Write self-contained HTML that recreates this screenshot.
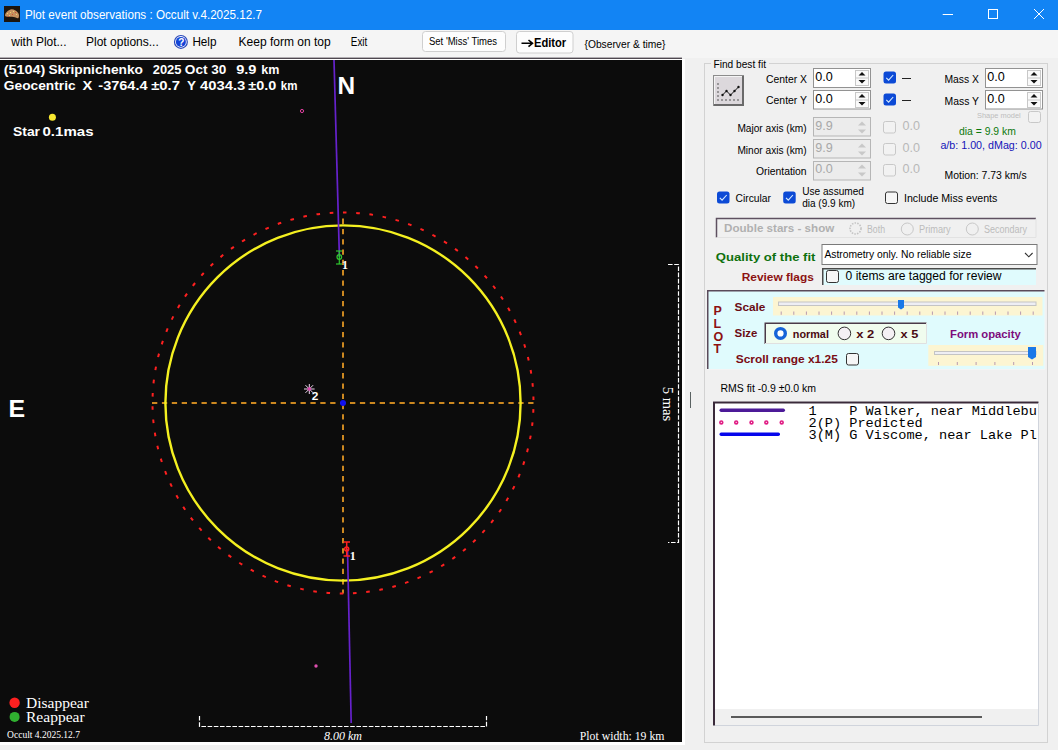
<!DOCTYPE html>
<html><head><meta charset="utf-8">
<style>
*{margin:0;padding:0;box-sizing:border-box}
html,body{width:1058px;height:750px;overflow:hidden;background:#f0f0f0;font-family:"Liberation Sans",sans-serif;font-size:12px;color:#000}
.a{position:absolute}
svg{position:absolute;left:0;top:0}
</style></head><body>
<svg width="1058" height="750" viewBox="0 0 1058 750">
<!-- ===== title bar ===== -->
<rect x="0" y="0" width="1058" height="30" fill="#1284f4"/>
<rect x="4" y="6" width="16" height="16" fill="#1c140e"/>
<path d="M5 15C5.5 12.5 7.5 11 9.5 10C11 9 13 9.2 15.5 10.5C17.5 11.5 19 13.5 19 15.5C19 17.5 18.5 18.5 17.5 18.3C16 17.8 14 16.8 12 16.8C10 16.8 7.5 17 6 16.5C5.2 16.2 4.9 15.6 5 15Z" fill="#c49060"/>
<g fill="#f0d070"><rect x="7" y="13" width="1" height="1"/><rect x="10" y="12" width="1" height="1"/><rect x="13" y="11" width="1" height="1"/><rect x="16" y="14" width="1" height="1"/><rect x="9" y="15" width="1" height="1"/></g>
<g fill="#d05030"><rect x="12" y="14" width="1" height="1"/><rect x="15" y="12" width="1" height="1"/><rect x="8" y="16" width="1" height="1"/></g>
<rect x="942.7" y="14" width="10.3" height="1" fill="#fff"/>
<rect x="988.5" y="9.5" width="9" height="9" fill="none" stroke="#fff" stroke-width="1"/>
<path d="M1034 9L1044 19M1044 9L1034 19" stroke="#fff" stroke-width="1"/>
<!-- ===== menu bar ===== -->
<rect x="0" y="30" width="1058" height="28" fill="#f5f5f5"/>

<circle cx="180.9" cy="41.9" r="6.4" fill="#fff" stroke="#2a48b8" stroke-width="1.2"/>
<circle cx="180.9" cy="41.9" r="5" fill="#1244d8"/>
<text x="181.2" y="45.6" font-family="Liberation Sans" font-weight="bold" font-size="10" fill="#fff" text-anchor="middle">?</text>
<rect x="422.5" y="31.5" width="83" height="20" rx="3" fill="#fdfdfd" stroke="#cfcfcf"/>
<rect x="516.5" y="31.5" width="56.5" height="21.5" rx="3" fill="#fdfdfd" stroke="#cfcfcf"/>
<!-- ===== plot ===== -->
<rect x="0" y="59" width="685" height="686" fill="#ffffff"/>
<rect x="0" y="57.6" width="682" height="1.4" fill="#4e4850"/>
<rect x="0" y="60" width="682" height="682" fill="#0c0c0c"/>
<circle cx="52.4" cy="117.2" r="3.5" fill="#f8e830"/>
<circle cx="302" cy="111" r="1.6" fill="none" stroke="#e040a0" stroke-width="1"/>
<circle cx="316" cy="666" r="1.7" fill="#e050b0"/>
<line x1="152" y1="403" x2="534" y2="403" stroke="#cc8820" stroke-width="2" stroke-dasharray="5.3 4.6"/>
<line x1="343" y1="218.6" x2="343" y2="593.5" stroke="#cc8820" stroke-width="2" stroke-dasharray="5.3 5"/>
<circle cx="343" cy="403" r="190.5" fill="none" stroke="#ff2020" stroke-width="2" stroke-dasharray="3.6 9.7" stroke-dashoffset="-6.2"/>
<circle cx="343" cy="403" r="177.6" fill="none" stroke="#f4f020" stroke-width="2.4"/>
<line x1="334" y1="60" x2="339.4" y2="257" stroke="#6622cc" stroke-width="1.7"/>
<line x1="347.5" y1="549" x2="351.2" y2="723" stroke="#6622cc" stroke-width="1.7"/>
<circle cx="343" cy="403" r="3" fill="#1010f0"/>
<g stroke="#30c830" stroke-width="1.2" fill="none">
<line x1="336" y1="251" x2="342" y2="251"/><line x1="336" y1="264" x2="342" y2="264"/>
<line x1="339.3" y1="251" x2="339.3" y2="264"/><circle cx="339.3" cy="257" r="2.3"/>
</g>
<g stroke="#ff2020" stroke-width="1.5" fill="none">
<line x1="343.5" y1="542" x2="350" y2="542"/><line x1="343.5" y1="556" x2="350" y2="556"/>
<line x1="346.7" y1="542" x2="346.7" y2="556"/><circle cx="346.7" cy="549" r="2"/>
</g>
<g stroke="#f0d8f0" stroke-width="1">
<line x1="309.3" y1="384" x2="309.3" y2="394"/><line x1="304" y1="389" x2="314.6" y2="389"/>
<line x1="305.5" y1="385.2" x2="313.1" y2="392.8"/><line x1="313.1" y1="385.2" x2="305.5" y2="392.8"/>
</g>
<circle cx="309.3" cy="389" r="1.8" fill="#e040b0"/>
<path d="M668 264.5H678.5V542.5H668" fill="none" stroke="#fff" stroke-width="1.2" stroke-dasharray="4.6 1.6"/>
<path d="M199.5 716V726.5H486.5V716" fill="none" stroke="#fff" stroke-width="1.2" stroke-dasharray="4.6 1.6"/>
<circle cx="14.6" cy="702.8" r="5.2" fill="#ff2020"/>
<circle cx="14.6" cy="716.9" r="5" fill="#30b030"/>
<!-- ===== right panel ===== -->
<rect x="690" y="392" width="1" height="16" fill="#5a6262"/>
<rect x="704.5" y="63.5" width="343" height="679" fill="none" stroke="#d2d2d2"/>
<rect x="711" y="58" width="58" height="12" fill="#f0f0f0"/>
<!-- fit button -->
<rect x="713.5" y="75.5" width="30" height="30" fill="#dcd8dc" stroke="#8c8c8c"/>
<path d="M714.5 104V76.5H742" fill="none" stroke="#f4f4f4"/>
<path d="M714 105H743V76" fill="none" stroke="#6a6a6a" stroke-width="2"/>
<g fill="#222"><circle cx="718" cy="84" r="0.7"/><circle cx="718" cy="88" r="0.7"/><circle cx="718" cy="92" r="0.7"/><circle cx="718" cy="96" r="0.7"/><circle cx="718" cy="100" r="0.7"/>
<circle cx="722" cy="100" r="0.7"/><circle cx="726" cy="100" r="0.7"/><circle cx="730" cy="100" r="0.7"/><circle cx="734" cy="100" r="0.7"/><circle cx="738" cy="100" r="0.7"/></g>
<path d="M722.5 95L726.5 91L730.5 95L734.5 91L738.5 87" fill="none" stroke="#111" stroke-width="1"/>
<g fill="#111"><circle cx="722.5" cy="95" r="1.2"/><circle cx="726.5" cy="91" r="1.2"/><circle cx="730.5" cy="95" r="1.2"/><circle cx="734.5" cy="91" r="1.2"/><circle cx="738.5" cy="87" r="1.2"/></g>
<!-- spinboxes -->
<g fill="#fff" stroke="#929292">
<rect x="813.5" y="68.5" width="57" height="19"/><rect x="813.5" y="90.5" width="57" height="18.5"/>
<rect x="985.5" y="68.5" width="57" height="19"/><rect x="985.5" y="90.5" width="57" height="18.5"/>
</g>
<g fill="#ececec" stroke="#b6b6b6">
<rect x="813.5" y="117.5" width="57" height="18.5"/><rect x="813.5" y="139.5" width="57" height="18.5"/><rect x="813.5" y="161.5" width="57" height="18.5"/>
</g>
<g fill="#fafafa" stroke="#c8c8c8">
<rect x="855.5" y="70.5" width="13" height="15"/><rect x="855.5" y="92.5" width="13" height="15"/>
<rect x="1027.5" y="70.5" width="13" height="15"/><rect x="1027.5" y="92.5" width="13" height="15"/>
</g>
<path d="M856 78H868M856 100H868M1028 78H1040M1028 100H1040" stroke="#c8c8c8" stroke-width="1"/>
<g fill="#111">
<path d="M858.5 75.5h7l-3.5-3.5z M858.5 80h7l-3.5 3.5z"/><path d="M858.5 97.5h7l-3.5-3.5z M858.5 102h7l-3.5 3.5z"/>
<path d="M1030.5 75.5h7l-3.5-3.5z M1030.5 80h7l-3.5 3.5z"/><path d="M1030.5 97.5h7l-3.5-3.5z M1030.5 102h7l-3.5 3.5z"/>
</g>
<g fill="#c8c8c8">
<path d="M858 125.5h8l-4-4z M858 129.5h8l-4 4z"/><path d="M858 147.5h8l-4-4z M858 151.5h8l-4 4z"/><path d="M858 168.5h8l-4-4z M858 172.5h8l-4 4z"/>
</g>
<!-- checkboxes -->
<g><rect x="883.5" y="71.5" width="12.5" height="12" rx="2.5" fill="#0c4ad6"/>
<path d="M886.3 77.8L888.6 80.2L893.2 75" fill="none" stroke="#d8ecff" stroke-width="1.1"/></g>
<g transform="translate(0,22)"><rect x="883.5" y="71.5" width="12.5" height="12" rx="2.5" fill="#0c4ad6"/>
<path d="M886.3 77.8L888.6 80.2L893.2 75" fill="none" stroke="#d8ecff" stroke-width="1.1"/></g>
<g transform="translate(-166.5,120)"><rect x="883.5" y="71.5" width="12.5" height="12" rx="2.5" fill="#0c4ad6"/>
<path d="M886.3 77.8L888.6 80.2L893.2 75" fill="none" stroke="#d8ecff" stroke-width="1.1"/></g>
<g transform="translate(-100.3,120)"><rect x="883.5" y="71.5" width="12.5" height="12" rx="2.5" fill="#0c4ad6"/>
<path d="M886.3 77.8L888.6 80.2L893.2 75" fill="none" stroke="#d8ecff" stroke-width="1.1"/></g>
<rect x="902" y="78" width="9" height="1" fill="#222"/>
<rect x="902" y="100" width="9" height="1" fill="#222"/>
<g fill="#f2f2f2" stroke="#c8c8c8">
<rect x="883.5" y="121.5" width="12" height="11.5" rx="2"/><rect x="883.5" y="143.5" width="12" height="11.5" rx="2"/><rect x="883.5" y="164.5" width="12" height="11.5" rx="2"/>
<rect x="1028.5" y="111.5" width="12" height="11" rx="2"/>
</g>

<!-- double stars -->
<path d="M716.5 237.5V218.5H1036" fill="none" stroke="#5e5060" stroke-width="1.5"/>
<path d="M716.5 237.5H1036V218.5" fill="none" stroke="#e2e2e2"/>
<circle cx="855.5" cy="228.5" r="5.5" fill="none" stroke="#c4c4c4" stroke-width="1.6" stroke-dasharray="1.5 1.2"/>
<circle cx="907.3" cy="229" r="6" fill="#f0f0f0" stroke="#c8c8c8"/>
<circle cx="972.3" cy="229" r="6" fill="#f0f0f0" stroke="#c8c8c8"/>
<!-- quality dropdown -->
<rect x="822" y="244.5" width="215" height="20" fill="#fff" stroke="#7a7a7a"/>
<path d="M1025 253L1028.8 256.8L1032.6 253" fill="none" stroke="#333" stroke-width="1.1"/>
<!-- review -->
<rect x="822" y="268" width="214" height="17" fill="#e0fbfd"/>
<path d="M822.75 285V268.75H1036" fill="none" stroke="#4a4a4a" stroke-width="1.5"/>
<!-- PLOT box -->
<rect x="707" y="290" width="338" height="79.5" fill="#e0fbfd"/>
<path d="M707.75 369.5V290.75H1045" fill="none" stroke="#5a4a5a" stroke-width="1.5"/>
<path d="M707 369.5H1045V290" fill="none" stroke="#f4f4f4"/>
<rect x="773" y="297" width="269.5" height="18.5" fill="#fcf5d2"/>
<rect x="778.5" y="302" width="257.5" height="3.5" fill="#eeeef4" stroke="#c4c4c4" stroke-width="1"/>
<g stroke="#b89ab0" stroke-width="1"><line x1="781.2" y1="311.5" x2="781.2" y2="314.8"/><line x1="793.8" y1="311.5" x2="793.8" y2="314.8"/><line x1="806.4" y1="311.5" x2="806.4" y2="314.8"/><line x1="819.0" y1="311.5" x2="819.0" y2="314.8"/><line x1="831.6" y1="311.5" x2="831.6" y2="314.8"/><line x1="844.2" y1="311.5" x2="844.2" y2="314.8"/><line x1="856.8" y1="311.5" x2="856.8" y2="314.8"/><line x1="869.4" y1="311.5" x2="869.4" y2="314.8"/><line x1="882.0" y1="311.5" x2="882.0" y2="314.8"/><line x1="894.6" y1="311.5" x2="894.6" y2="314.8"/><line x1="907.2" y1="311.5" x2="907.2" y2="314.8"/><line x1="919.8" y1="311.5" x2="919.8" y2="314.8"/><line x1="932.4" y1="311.5" x2="932.4" y2="314.8"/><line x1="945.0" y1="311.5" x2="945.0" y2="314.8"/><line x1="957.6" y1="311.5" x2="957.6" y2="314.8"/><line x1="970.2" y1="311.5" x2="970.2" y2="314.8"/><line x1="982.8" y1="311.5" x2="982.8" y2="314.8"/><line x1="995.4" y1="311.5" x2="995.4" y2="314.8"/><line x1="1008.0" y1="311.5" x2="1008.0" y2="314.8"/><line x1="1020.6" y1="311.5" x2="1020.6" y2="314.8"/><line x1="1033.2" y1="311.5" x2="1033.2" y2="314.8"/></g>
<path d="M898 300H904V307.5L901 309.5L898 307.5Z" fill="#1a78e8"/>
<rect x="764.5" y="322.5" width="162" height="21.5" fill="#f0fcee"/>
<path d="M765.25 344V323.25H926.5" fill="none" stroke="#4a3a4a" stroke-width="1.5"/>
<path d="M765 343.5H926.5V323" fill="none" stroke="#e0e0e0"/>
<circle cx="780.5" cy="333.4" r="4.8" fill="#fff" stroke="#1664d8" stroke-width="3.4"/>
<circle cx="844.4" cy="333.4" r="6.3" fill="#f4f0f4" stroke="#333" stroke-width="1"/>
<circle cx="888.5" cy="333.4" r="6.3" fill="#f4f0f4" stroke="#333" stroke-width="1"/>
<rect x="928.3" y="345" width="115" height="20.8" fill="#fcf5d2"/>
<rect x="934.5" y="351.5" width="101.5" height="3" fill="#eeeef4" stroke="#c4c4c4" stroke-width="1"/>
<g stroke="#b89ab0" stroke-width="1"><line x1="938.5" y1="362" x2="938.5" y2="365"/><line x1="957.3" y1="362" x2="957.3" y2="365"/><line x1="976.1" y1="362" x2="976.1" y2="365"/><line x1="994.9" y1="362" x2="994.9" y2="365"/><line x1="1013.7" y1="362" x2="1013.7" y2="365"/><line x1="1032.5" y1="362" x2="1032.5" y2="365"/></g>
<path d="M1028 347H1036V357L1032 359.5L1028 357Z" fill="#1a78e8"/>
<!-- list -->
<rect x="713" y="401.5" width="325.5" height="323.5" fill="#fff"/>
<rect x="715" y="709" width="323.5" height="16" fill="#f0f0f0"/>
<path d="M714 725.5V402.5H1038.5" fill="none" stroke="#3a2a3a" stroke-width="2"/>
<rect x="731" y="716" width="251" height="2" fill="#5a5a5a"/>
<path d="M715 725.5H1038.5V403" fill="none" stroke="#d0d4dc"/>
<rect x="719.5" y="408.5" width="65.5" height="3.5" rx="1.7" fill="#4c1a98"/>
<g fill="none" stroke="#e01c84" stroke-width="1.7">
<circle cx="721.3" cy="422.4" r="1.4"/><circle cx="736.2" cy="422.4" r="1.4"/><circle cx="751.5" cy="422.4" r="1.4"/><circle cx="766.3" cy="422.4" r="1.4"/><circle cx="781.7" cy="422.4" r="1.4"/>
</g>
<rect x="719.5" y="432.4" width="60.5" height="3.5" rx="1.7" fill="#0606ec"/>
<g fill="#f6f6f6" stroke="#333">
<rect x="885.5" y="192" width="12" height="11.5" rx="2"/>
<rect x="826.5" y="270.5" width="12" height="12" rx="2"/>
<rect x="846.5" y="353.5" width="12" height="11.5" rx="2"/>
</g>
<text x="25" y="18.7" font-family="Liberation Sans" font-size="12.2" font-weight="normal" font-style="normal" fill="#fff" textLength="237" lengthAdjust="spacingAndGlyphs">Plot event observations : Occult v.4.2025.12.7</text>
<text x="11.3" y="46" font-family="Liberation Sans" font-size="12.2" font-weight="normal" font-style="normal" fill="#000" textLength="55.2" lengthAdjust="spacingAndGlyphs">with Plot...</text>
<text x="86" y="46" font-family="Liberation Sans" font-size="12.2" font-weight="normal" font-style="normal" fill="#000" textLength="72.8" lengthAdjust="spacingAndGlyphs">Plot options...</text>
<text x="192.4" y="46" font-family="Liberation Sans" font-size="12.2" font-weight="normal" font-style="normal" fill="#000" textLength="24.1" lengthAdjust="spacingAndGlyphs">Help</text>
<text x="238.5" y="46" font-family="Liberation Sans" font-size="12.2" font-weight="normal" font-style="normal" fill="#000" textLength="92.2" lengthAdjust="spacingAndGlyphs">Keep form on top</text>
<text x="350.8" y="46" font-family="Liberation Sans" font-size="12.2" font-weight="normal" font-style="normal" fill="#000" textLength="16.5" lengthAdjust="spacingAndGlyphs">Exit</text>
<text x="429" y="45" font-family="Liberation Sans" font-size="10" font-weight="normal" font-style="normal" fill="#000" textLength="68" lengthAdjust="spacingAndGlyphs">Set 'Miss' Times</text>
<text x="534" y="47" font-family="Liberation Sans" font-size="12.5" font-weight="bold" font-style="normal" fill="#000" textLength="32.2" lengthAdjust="spacingAndGlyphs">Editor</text>
<path d="M521.5 43.3H532M528.5 40L532.5 43.3L528.5 46.6" fill="none" stroke="#000" stroke-width="1.6"/>
<text x="584.5" y="47.6" font-family="Liberation Sans" font-size="11" font-weight="normal" font-style="normal" fill="#000" textLength="81" lengthAdjust="spacingAndGlyphs">{Observer &amp; time}</text>
<text x="3.8" y="73.9" font-family="Liberation Sans" font-size="12.6" font-weight="bold" font-style="normal" fill="#fff" textLength="41.6" lengthAdjust="spacingAndGlyphs">(5104)</text>
<text x="48.4" y="73.9" font-family="Liberation Sans" font-size="12.6" font-weight="bold" font-style="normal" fill="#fff" textLength="94.6" lengthAdjust="spacingAndGlyphs">Skripnichenko</text>
<text x="152.7" y="73.9" font-family="Liberation Sans" font-size="12.6" font-weight="bold" font-style="normal" fill="#fff" textLength="28.8" lengthAdjust="spacingAndGlyphs">2025</text>
<text x="184.8" y="73.9" font-family="Liberation Sans" font-size="12.6" font-weight="bold" font-style="normal" fill="#fff" textLength="22.7" lengthAdjust="spacingAndGlyphs">Oct</text>
<text x="211.3" y="73.9" font-family="Liberation Sans" font-size="12.6" font-weight="bold" font-style="normal" fill="#fff" textLength="15.1" lengthAdjust="spacingAndGlyphs">30</text>
<text x="236.2" y="73.9" font-family="Liberation Sans" font-size="12.6" font-weight="bold" font-style="normal" fill="#fff" textLength="20.3" lengthAdjust="spacingAndGlyphs">9.9</text>
<text x="261.2" y="73.9" font-family="Liberation Sans" font-size="12.6" font-weight="bold" font-style="normal" fill="#fff" textLength="18.1" lengthAdjust="spacingAndGlyphs">km</text>
<text x="3.8" y="89.5" font-family="Liberation Sans" font-size="12.6" font-weight="bold" font-style="normal" fill="#fff" textLength="71.8" lengthAdjust="spacingAndGlyphs">Geocentric</text>
<text x="82.4" y="89.5" font-family="Liberation Sans" font-size="12.6" font-weight="bold" font-style="normal" fill="#fff" textLength="9.8" lengthAdjust="spacingAndGlyphs">X</text>
<text x="98.3" y="89.5" font-family="Liberation Sans" font-size="12.6" font-weight="bold" font-style="normal" fill="#fff" textLength="49.2" lengthAdjust="spacingAndGlyphs">-3764.4</text>
<text x="151.2" y="89.5" font-family="Liberation Sans" font-size="12.6" font-weight="bold" font-style="normal" fill="#fff" textLength="28.8" lengthAdjust="spacingAndGlyphs">±0.7</text>
<text x="187" y="89.5" font-family="Liberation Sans" font-size="12.6" font-weight="bold" font-style="normal" fill="#fff" textLength="9" lengthAdjust="spacingAndGlyphs">Y</text>
<text x="200" y="89.5" font-family="Liberation Sans" font-size="12.6" font-weight="bold" font-style="normal" fill="#fff" textLength="45.3" lengthAdjust="spacingAndGlyphs">4034.3</text>
<text x="248.3" y="89.5" font-family="Liberation Sans" font-size="12.6" font-weight="bold" font-style="normal" fill="#fff" textLength="28.0" lengthAdjust="spacingAndGlyphs">±0.0</text>
<text x="280.8" y="89.5" font-family="Liberation Sans" font-size="12.6" font-weight="bold" font-style="normal" fill="#fff" textLength="16.6" lengthAdjust="spacingAndGlyphs">km</text>
<text x="13" y="136" font-family="Liberation Sans" font-size="13" font-weight="bold" font-style="normal" fill="#fff" textLength="27" lengthAdjust="spacingAndGlyphs">Star</text>
<text x="42.5" y="136" font-family="Liberation Sans" font-size="13" font-weight="bold" font-style="normal" fill="#fff" textLength="51" lengthAdjust="spacingAndGlyphs">0.1mas</text>
<text x="337.6" y="94.4" font-family="Liberation Sans" font-size="24.2" font-weight="bold" font-style="normal" fill="#fff" textLength="17.6" lengthAdjust="spacingAndGlyphs">N</text>
<text x="8.6" y="417.2" font-family="Liberation Sans" font-size="24.2" font-weight="bold" font-style="normal" fill="#fff" textLength="16.6" lengthAdjust="spacingAndGlyphs">E</text>
<text x="26" y="707.8" font-family="Liberation Serif" font-size="14.8" font-weight="normal" font-style="normal" fill="#fff" textLength="62.8" lengthAdjust="spacingAndGlyphs">Disappear</text>
<text x="26" y="721.7" font-family="Liberation Serif" font-size="14.8" font-weight="normal" font-style="normal" fill="#fff" textLength="58.6" lengthAdjust="spacingAndGlyphs">Reappear</text>
<text x="7.1" y="737.7" font-family="Liberation Serif" font-size="10" font-weight="normal" font-style="normal" fill="#fff" textLength="72.8" lengthAdjust="spacingAndGlyphs">Occult 4.2025.12.7</text>
<text x="579.8" y="739.8" font-family="Liberation Serif" font-size="13" font-weight="normal" font-style="normal" fill="#fff" textLength="84.7" lengthAdjust="spacingAndGlyphs">Plot width: 19 km</text>
<text x="324" y="739.5" font-family="Liberation Serif" font-size="13" font-weight="normal" font-style="italic" fill="#fff" textLength="38" lengthAdjust="spacingAndGlyphs">8.00 km</text>
<text x="342" y="269" font-family="Liberation Serif" font-size="12" font-weight="bold" font-style="normal" fill="#fff" textLength="6" lengthAdjust="spacingAndGlyphs">1</text>
<text x="349.8" y="559.8" font-family="Liberation Serif" font-size="12" font-weight="bold" font-style="normal" fill="#fff" textLength="6" lengthAdjust="spacingAndGlyphs">1</text>
<text x="311.7" y="400" font-family="Liberation Sans" font-size="11" font-weight="bold" font-style="normal" fill="#fff" textLength="6.6" lengthAdjust="spacingAndGlyphs">2</text>
<text transform="translate(663.2,386.8) rotate(90)" x="0" y="0" font-family="Liberation Serif" font-size="14" fill="#fff" textLength="34.4" lengthAdjust="spacingAndGlyphs">5 mas</text>
<text x="713.5" y="67.7" font-family="Liberation Sans" font-size="11.4" font-weight="normal" font-style="normal" fill="#000" textLength="52.5" lengthAdjust="spacingAndGlyphs">Find best fit</text>
<text x="766" y="82.7" font-family="Liberation Sans" font-size="11.5" font-weight="normal" font-style="normal" fill="#000" textLength="41" lengthAdjust="spacingAndGlyphs">Center X</text>
<text x="766" y="104.4" font-family="Liberation Sans" font-size="11.5" font-weight="normal" font-style="normal" fill="#000" textLength="41" lengthAdjust="spacingAndGlyphs">Center Y</text>
<text x="944.5" y="82.6" font-family="Liberation Sans" font-size="11.5" font-weight="normal" font-style="normal" fill="#000" textLength="34.5" lengthAdjust="spacingAndGlyphs">Mass X</text>
<text x="944.5" y="104.5" font-family="Liberation Sans" font-size="11.5" font-weight="normal" font-style="normal" fill="#000" textLength="34.5" lengthAdjust="spacingAndGlyphs">Mass Y</text>
<text x="815.3" y="80.7" font-family="Liberation Sans" font-size="12.5" font-weight="normal" font-style="normal" fill="#000" textLength="17.5" lengthAdjust="spacingAndGlyphs">0.0</text>
<text x="815.3" y="102.5" font-family="Liberation Sans" font-size="12.5" font-weight="normal" font-style="normal" fill="#000" textLength="17.5" lengthAdjust="spacingAndGlyphs">0.0</text>
<text x="987.3" y="80.7" font-family="Liberation Sans" font-size="12.5" font-weight="normal" font-style="normal" fill="#000" textLength="17.5" lengthAdjust="spacingAndGlyphs">0.0</text>
<text x="987.3" y="102.5" font-family="Liberation Sans" font-size="12.5" font-weight="normal" font-style="normal" fill="#000" textLength="17.5" lengthAdjust="spacingAndGlyphs">0.0</text>
<text x="737.4" y="131.7" font-family="Liberation Sans" font-size="11.5" font-weight="normal" font-style="normal" fill="#000" textLength="69.2" lengthAdjust="spacingAndGlyphs">Major axis (km)</text>
<text x="737.4" y="153.5" font-family="Liberation Sans" font-size="11.5" font-weight="normal" font-style="normal" fill="#000" textLength="69.2" lengthAdjust="spacingAndGlyphs">Minor axis (km)</text>
<text x="756" y="174.8" font-family="Liberation Sans" font-size="11.5" font-weight="normal" font-style="normal" fill="#000" textLength="50.6" lengthAdjust="spacingAndGlyphs">Orientation</text>
<text x="815.3" y="130" font-family="Liberation Sans" font-size="12.5" font-weight="normal" font-style="normal" fill="#a8a8a8" textLength="17.5" lengthAdjust="spacingAndGlyphs">9.9</text>
<text x="815.3" y="151.8" font-family="Liberation Sans" font-size="12.5" font-weight="normal" font-style="normal" fill="#a8a8a8" textLength="17.5" lengthAdjust="spacingAndGlyphs">9.9</text>
<text x="815.3" y="173.3" font-family="Liberation Sans" font-size="12.5" font-weight="normal" font-style="normal" fill="#a8a8a8" textLength="17.5" lengthAdjust="spacingAndGlyphs">0.0</text>
<text x="902.4" y="130" font-family="Liberation Sans" font-size="12.5" font-weight="normal" font-style="normal" fill="#b8b8b8" textLength="17.5" lengthAdjust="spacingAndGlyphs">0.0</text>
<text x="902.4" y="151.8" font-family="Liberation Sans" font-size="12.5" font-weight="normal" font-style="normal" fill="#b8b8b8" textLength="17.5" lengthAdjust="spacingAndGlyphs">0.0</text>
<text x="902.4" y="173.3" font-family="Liberation Sans" font-size="12.5" font-weight="normal" font-style="normal" fill="#b8b8b8" textLength="17.5" lengthAdjust="spacingAndGlyphs">0.0</text>
<text x="977" y="118" font-family="Liberation Sans" font-size="8" font-weight="normal" font-style="normal" fill="#bdbdbd" textLength="43.7" lengthAdjust="spacingAndGlyphs">Shape model</text>
<text x="959" y="134.5" font-family="Liberation Sans" font-size="11" font-weight="normal" font-style="normal" fill="#0c780c" textLength="56.8" lengthAdjust="spacingAndGlyphs">dia = 9.9 km</text>
<text x="940.4" y="148.8" font-family="Liberation Sans" font-size="11" font-weight="normal" font-style="normal" fill="#1414b8" textLength="101.2" lengthAdjust="spacingAndGlyphs">a/b: 1.00, dMag: 0.00</text>
<text x="944.6" y="178.7" font-family="Liberation Sans" font-size="11.5" font-weight="normal" font-style="normal" fill="#000" textLength="82.1" lengthAdjust="spacingAndGlyphs">Motion: 7.73 km/s</text>
<text x="735.5" y="201.7" font-family="Liberation Sans" font-size="11.5" font-weight="normal" font-style="normal" fill="#000" textLength="35.5" lengthAdjust="spacingAndGlyphs">Circular</text>
<text x="802.2" y="194.8" font-family="Liberation Sans" font-size="11.5" font-weight="normal" font-style="normal" fill="#000" textLength="61.8" lengthAdjust="spacingAndGlyphs">Use assumed</text>
<text x="802.2" y="207.3" font-family="Liberation Sans" font-size="11.5" font-weight="normal" font-style="normal" fill="#000" textLength="53" lengthAdjust="spacingAndGlyphs">dia (9.9 km)</text>
<text x="904" y="201.5" font-family="Liberation Sans" font-size="11.5" font-weight="normal" font-style="normal" fill="#000" textLength="93.4" lengthAdjust="spacingAndGlyphs">Include Miss events</text>
<text x="724" y="231.8" font-family="Liberation Sans" font-size="11.5" font-weight="bold" font-style="normal" fill="#b0b0b0" textLength="110.3" lengthAdjust="spacingAndGlyphs">Double stars - show</text>
<text x="867" y="233" font-family="Liberation Sans" font-size="10" font-weight="normal" font-style="normal" fill="#bcbcbc" textLength="18" lengthAdjust="spacingAndGlyphs">Both</text>
<text x="919" y="233" font-family="Liberation Sans" font-size="10" font-weight="normal" font-style="normal" fill="#bcbcbc" textLength="31.7" lengthAdjust="spacingAndGlyphs">Primary</text>
<text x="984" y="233" font-family="Liberation Sans" font-size="10" font-weight="normal" font-style="normal" fill="#bcbcbc" textLength="43" lengthAdjust="spacingAndGlyphs">Secondary</text>
<text x="715.8" y="260.8" font-family="Liberation Sans" font-size="11.2" font-weight="bold" font-style="normal" fill="#0e700e" textLength="99.7" lengthAdjust="spacingAndGlyphs">Quality of the fit</text>
<text x="824.4" y="257.8" font-family="Liberation Sans" font-size="11.5" font-weight="normal" font-style="normal" fill="#000" textLength="147" lengthAdjust="spacingAndGlyphs">Astrometry only. No reliable size</text>
<text x="741.7" y="280.7" font-family="Liberation Sans" font-size="11.2" font-weight="bold" font-style="normal" fill="#8c1212" textLength="72.1" lengthAdjust="spacingAndGlyphs">Review flags</text>
<text x="845.6" y="280" font-family="Liberation Sans" font-size="12.5" font-weight="normal" font-style="normal" fill="#000" textLength="156" lengthAdjust="spacingAndGlyphs">0 items are tagged for review</text>
<text x="713.5" y="315.3" font-family="Liberation Sans" font-size="12.5" font-weight="bold" font-style="normal" fill="#8c1212" text-anchor="start">P</text>
<text x="713.5" y="327.90000000000003" font-family="Liberation Sans" font-size="12.5" font-weight="bold" font-style="normal" fill="#8c1212" text-anchor="start">L</text>
<text x="713.5" y="340.5" font-family="Liberation Sans" font-size="12.5" font-weight="bold" font-style="normal" fill="#8c1212" text-anchor="start">O</text>
<text x="713.5" y="353.1" font-family="Liberation Sans" font-size="12.5" font-weight="bold" font-style="normal" fill="#8c1212" text-anchor="start">T</text>
<text x="734.5" y="310.8" font-family="Liberation Sans" font-size="11.3" font-weight="bold" font-style="normal" fill="#6a0c14" textLength="30.9" lengthAdjust="spacingAndGlyphs">Scale</text>
<text x="734.5" y="336.9" font-family="Liberation Sans" font-size="11.3" font-weight="bold" font-style="normal" fill="#6a0c14" textLength="22.9" lengthAdjust="spacingAndGlyphs">Size</text>
<text x="792.8" y="337.8" font-family="Liberation Sans" font-size="11.3" font-weight="bold" font-style="normal" fill="#4a0a12" textLength="36.1" lengthAdjust="spacingAndGlyphs">normal</text>
<text x="856.2" y="337.8" font-family="Liberation Sans" font-size="11.3" font-weight="bold" font-style="normal" fill="#4a0a12" textLength="18" lengthAdjust="spacingAndGlyphs">x 2</text>
<text x="900.6" y="337.8" font-family="Liberation Sans" font-size="11.3" font-weight="bold" font-style="normal" fill="#4a0a12" textLength="17.7" lengthAdjust="spacingAndGlyphs">x 5</text>
<text x="950" y="338.3" font-family="Liberation Sans" font-size="11.3" font-weight="bold" font-style="normal" fill="#7c0c7c" textLength="70.7" lengthAdjust="spacingAndGlyphs">Form opacity</text>
<text x="735.7" y="362.7" font-family="Liberation Sans" font-size="11.3" font-weight="bold" font-style="normal" fill="#7a0c14" textLength="102.1" lengthAdjust="spacingAndGlyphs">Scroll range x1.25</text>
<text x="720.4" y="391.8" font-family="Liberation Sans" font-size="11.5" font-weight="normal" font-style="normal" fill="#000" textLength="95.6" lengthAdjust="spacingAndGlyphs">RMS fit -0.9 ±0.0 km</text>
<text x="808.5" y="415.3" font-family="Liberation Mono" font-size="13.6" fill="#000" xml:space="preserve">1    P Walker, near Middlebu</text>
<text x="808.5" y="427.3" font-family="Liberation Mono" font-size="13.6" fill="#000" xml:space="preserve">2(P) Predicted</text>
<text x="808.5" y="439.3" font-family="Liberation Mono" font-size="13.6" fill="#000" xml:space="preserve">3(M) G Viscome, near Lake Pl</text>
</svg>
</body></html>
